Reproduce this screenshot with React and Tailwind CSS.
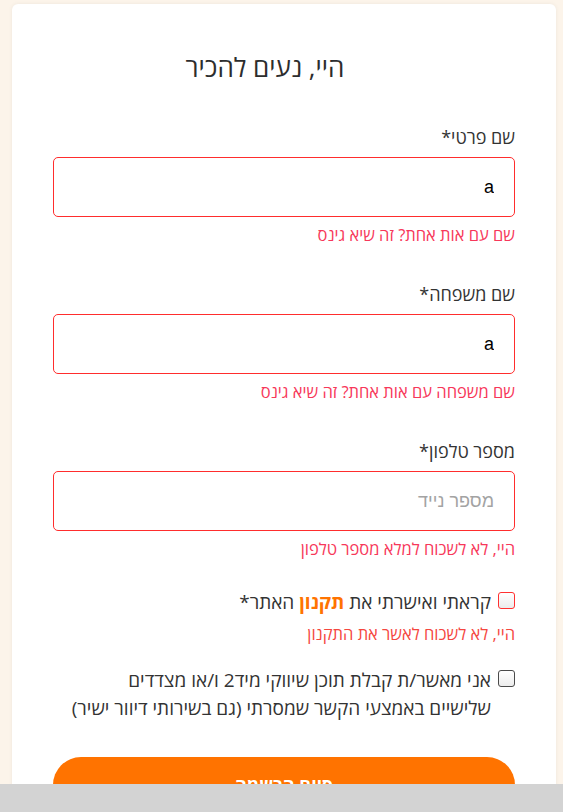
import React, { useState } from "react";

const FONT = { fontFamily: '"Open Sans", "DejaVu Sans", sans-serif' };

const FIELDS = [
  { id: "first", label: "שם פרטי*", placeholder: "", error: "שם עם אות אחת? זה שיא גינס" },
  { id: "last", label: "שם משפחה*", placeholder: "", error: "שם משפחה עם אות אחת? זה שיא גינס" },
  { id: "phone", label: "מספר טלפון*", placeholder: "מספר נייד", error: "היי, לא לשכוח למלא מספר טלפון" },
];

const Field = ({ label, value, placeholder, error, onChange }) => (
  <div className="flex flex-col">
    <label className="text-[18px] leading-6 text-[#333]">{label}</label>
    <input
      type="text"
      dir="rtl"
      value={value}
      placeholder={placeholder}
      onChange={onChange}
      className="mt-2 h-[60px] w-full rounded-[5px] border border-[#ff2d2d] bg-white px-5 text-[18px] text-black outline-none placeholder:text-[#a3a3a3]"
      style={{ fontFamily: '"Liberation Sans", "Open Sans", sans-serif' }}
    />
    <p className="mt-2 text-[16.5px] leading-5 text-[#f7385a]">{error}</p>
  </div>
);

const Checkbox = ({ invalid }) => (
  <span
    className={
      "mt-[4px] h-[17px] w-[17px] shrink-0 rounded-[3px] border bg-gradient-to-b from-white to-[#ececec] " +
      (invalid ? "border-[#ff3030]" : "border-[#4a4a4a]")
    }
  />
);

export default function App() {
  // значения полей формы
  const [values, setValues] = useState({ first: "a", last: "a", phone: "" });

  return (
    <div dir="rtl" className="min-h-[812px] bg-[#fcf4ea] pl-[12px] pr-[7px] pt-1" style={FONT}>
      <div className="rounded-t-[6px] bg-white px-[41px] pb-10 pt-[45px] shadow-[0_0_4px_rgba(0,0,0,0.06)]">
        <h1 className="pr-[38px] text-center text-[26px] leading-9 text-[#2d2d2d]">היי, נעים להכיר</h1>

        <div className="mt-10 flex flex-col gap-[37px]">
          {FIELDS.map((f) => (
            <Field
              key={f.id}
              label={f.label}
              value={values[f.id]}
              placeholder={f.placeholder}
              error={f.error}
              onChange={(e) => setValues((v) => ({ ...v, [f.id]: e.target.value }))}
            />
          ))}
        </div>

        <div className="mt-[29px] flex items-start gap-[7px]">
          <Checkbox invalid />
          <p className="text-[19px] leading-7 text-[#333]">
            קראתי ואישרתי את <span className="font-bold text-[#ff7300]">תקנון</span> האתר*
          </p>
        </div>
        <p className="mt-2 text-[16.5px] leading-5 text-[#f5473f]">היי, לא לשכוח לאשר את התקנון</p>

        <div className="mt-[22px] flex items-start gap-[7px]">
          <Checkbox />
          <p className="text-[19px] leading-7 text-[#333]">
            אני מאשר/ת קבלת תוכן שיווקי מיד2 ו/או מצדדים
            <br />
            שלישיים באמצעי הקשר שמסרתי (גם בשירותי דיוור ישיר)
          </p>
        </div>

        <button className="mt-[35px] h-14 w-full rounded-[28px] bg-[#ff7300] text-[18px] font-bold text-white">
          סיום הרשמה
        </button>
      </div>

      <div className="fixed bottom-0 left-0 h-[28px] w-full bg-[#d3d3d3]" />
    </div>
  );
}
